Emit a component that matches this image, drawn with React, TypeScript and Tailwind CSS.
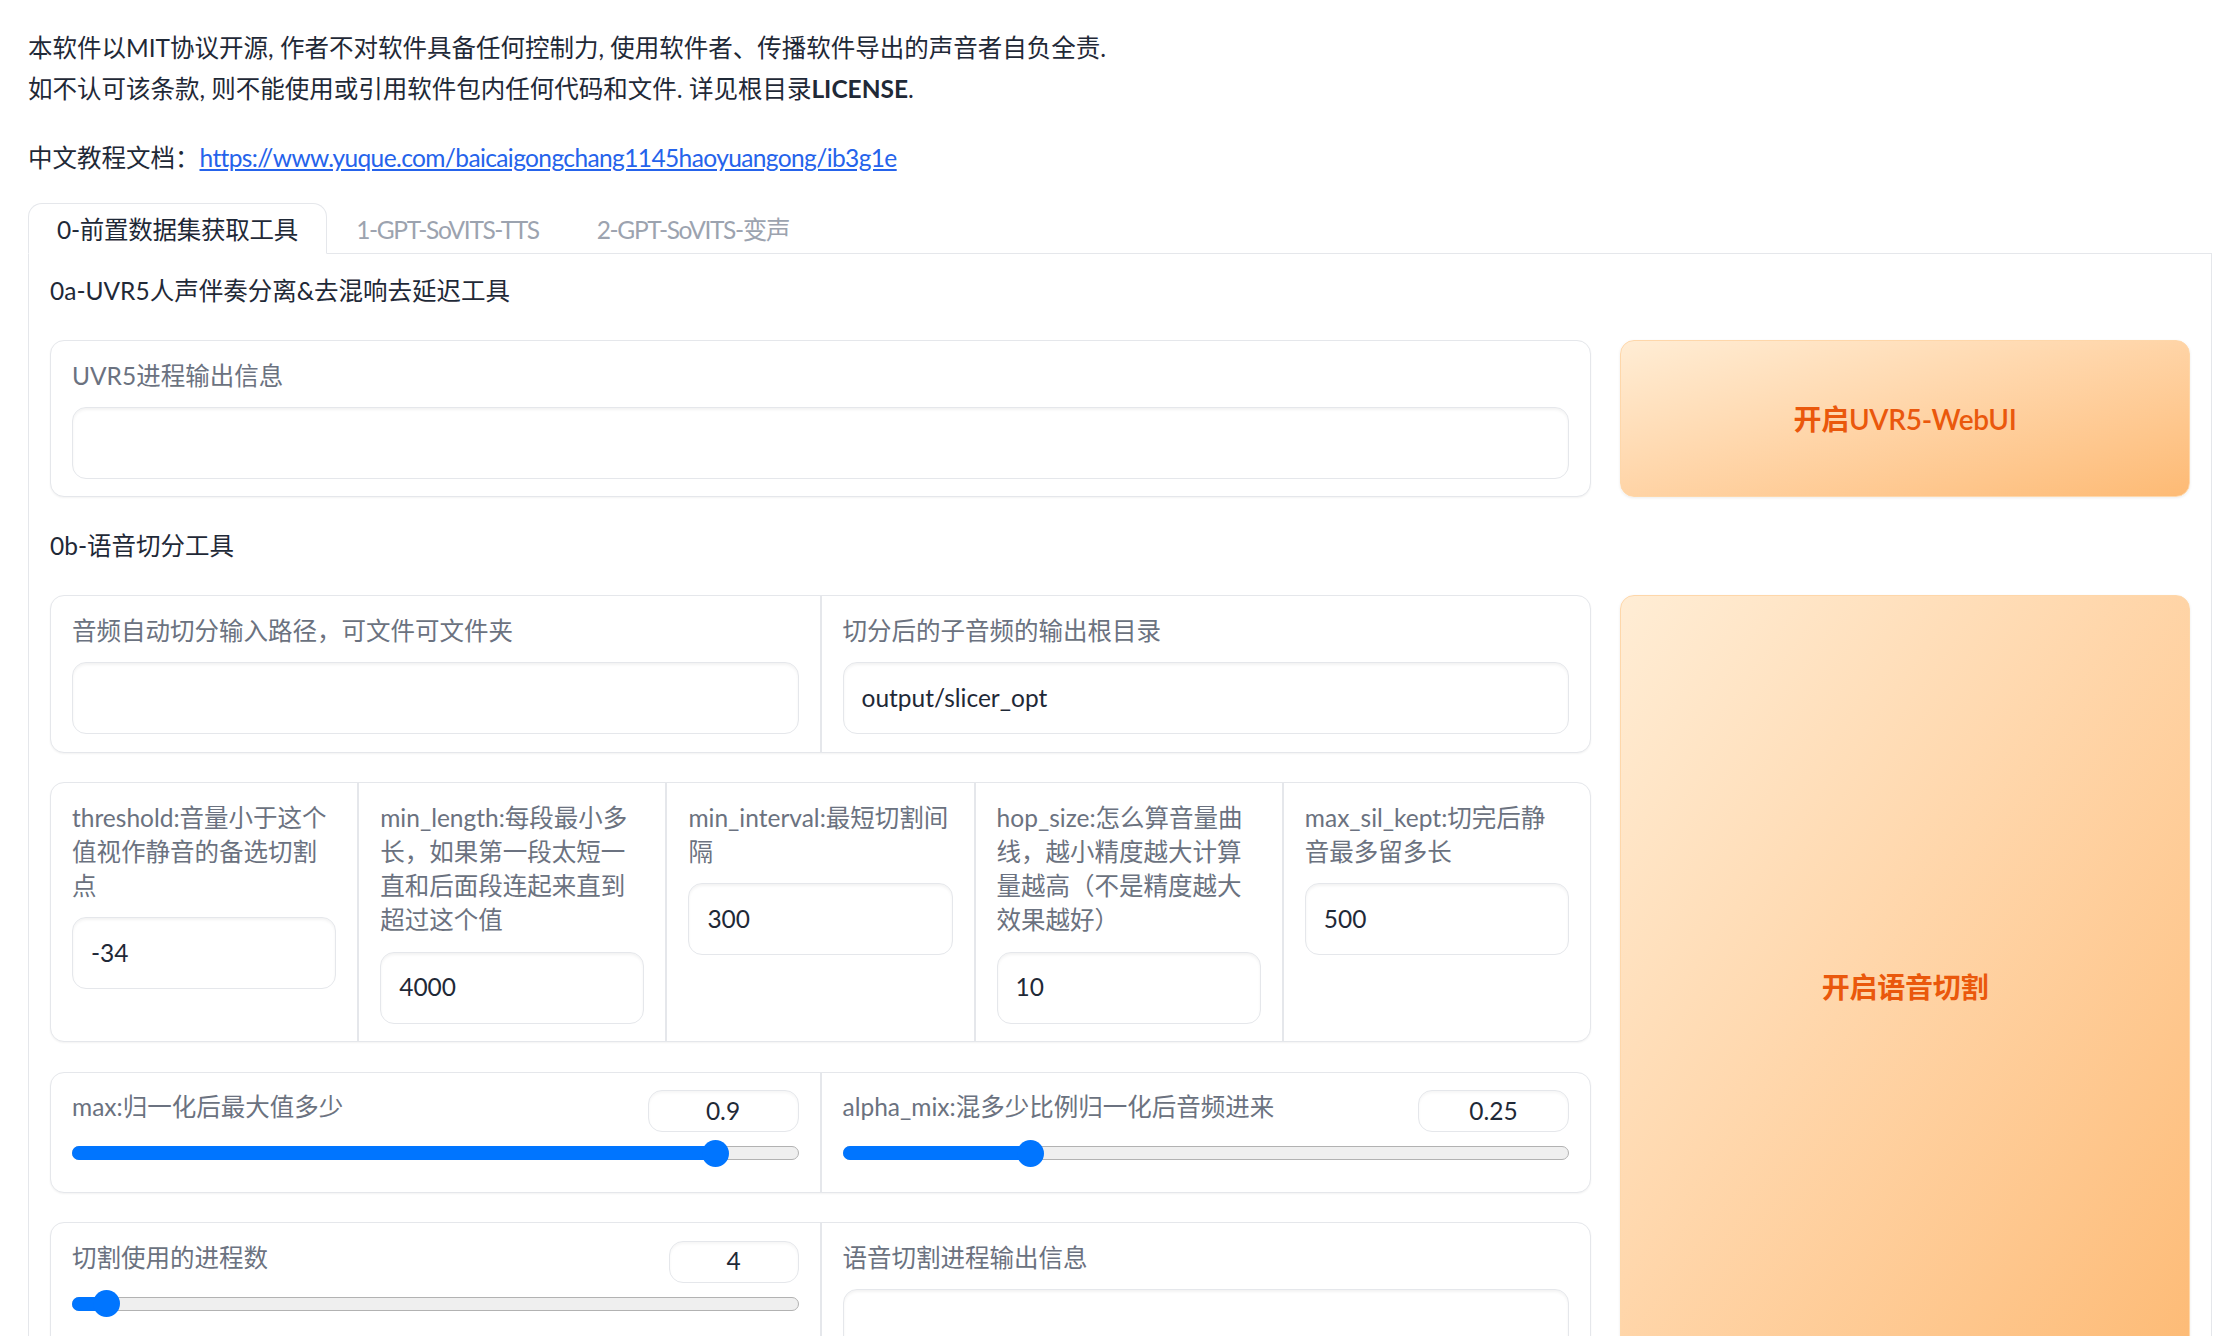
import React from "react";

const border = "border-[#e5e7eb]";

function Label({ children }: { children: React.ReactNode }) {
  return (
    <span className="mb-[14px] block leading-[34.3px] text-[#6b7280]">
      {children}
    </span>
  );
}

function TextBox({ value = "" }: { value?: string }) {
  return (
    <div
      className={`flex h-[72px] w-full items-center rounded-[14px] border ${border} bg-white px-[18px] text-[#1f2937] shadow-[inset_0_2px_3px_rgba(0,0,0,0.05)]`}
    >
      {value}
    </div>
  );
}

function Field({ label, value }: { label: string; value?: string }) {
  return (
    <div className="min-w-0 flex-1 px-[21px] py-[17.5px]">
      <Label>{label}</Label>
      <TextBox value={value} />
    </div>
  );
}

function Slider({
  label,
  value,
  frac,
  numW = "w-[151px]",
}: {
  label: string;
  value: string;
  frac: number;
  numW?: string;
}) {
  return (
    <div className="min-w-0 flex-1 px-[21px] py-[17.5px]">
      <div className="flex h-[42px] items-start justify-between">
        <span className="leading-[34.3px] text-[#6b7280]">{label}</span>
        <div
          className={`flex h-[42px] ${numW} items-center justify-center rounded-[14px] border ${border} bg-white text-[#1f2937] shadow-[inset_0_2px_3px_rgba(0,0,0,0.04)]`}
        >
          {value}
        </div>
      </div>
      <div className="relative h-[42px]">
        <div className="absolute inset-x-0 top-[14px] h-[14px] rounded-full border border-[#b2b2b2] bg-[#efefef]" />
        <div
          className="absolute left-0 top-[14px] h-[14px] rounded-l-full bg-[#0075ff]"
          style={{ width: `calc(13.5px + ${frac} * (100% - 27px))` }}
        />
        <div
          className="absolute top-[7.5px] h-[27px] w-[27px] rounded-full bg-[#0075ff]"
          style={{ left: `calc(${frac} * (100% - 27px))` }}
        />
      </div>
    </div>
  );
}

function Group({ children }: { children: React.ReactNode }) {
  return (
    <div
      className={`flex items-stretch divide-x-2 divide-[#e5e7eb] rounded-[14px] border ${border} bg-white shadow-[0_1px_2px_rgba(0,0,0,0.05)]`}
    >
      {children}
    </div>
  );
}

function PrimaryButton({ children }: { children: React.ReactNode }) {
  return (
    <button className="flex w-[570px] shrink-0 items-center justify-center rounded-[14px] border border-[#fed7aa] bg-gradient-to-br from-[#ffedd5] to-[#fdba74] text-[28px] font-semibold tracking-[-0.01em] text-[#ea580c] shadow-[0_1px_3px_rgba(0,0,0,0.08)]">
      {children}
    </button>
  );
}

const tabs = ["0-前置数据集获取工具", "1-GPT-SoVITS-TTS", "2-GPT-SoVITS-变声"];

export default function App() {
  return (
    <div className="h-screen overflow-hidden bg-white px-[28px] pt-[27px] font-['Lato','Noto_Sans_CJK_SC',sans-serif] text-[24.5px] text-[#1f2937]">
      <div className="leading-[41px]">
        <p>
          本软件以MIT协议开源, 作者不对软件具备任何控制力, 使用软件者、传播软件导出的声音者自负全责.
          <br />
          如不认可该条款, 则不能使用或引用软件包内任何代码和文件. 详见根目录<b>LICENSE</b>.
        </p>
        <p className="mt-[27.5px]">
          中文教程文档：
          <a className="tracking-[-0.025em] text-[#2563eb] underline" href="#">
            https://www.yuque.com/baicaigongchang1145haoyuangong/ib3g1e
          </a>
        </p>
      </div>

      <div className="mt-[25px]">
        <div className={`flex border-b ${border}`}>
          {tabs.map((t, i) => (
            <button
              key={t}
              className={`-mb-px h-[51px] rounded-t-[14px] border px-[28px] pt-[5px] ${
                i === 0
                  ? `${border} border-b-white bg-white tracking-[-0.01em] text-[#1f2937]`
                  : "border-transparent tracking-[-0.055em] text-[#9ca3af]"
              }`}
            >
              {t}
            </button>
          ))}
        </div>

        <div className={`border-x border-b ${border} px-[21px] pb-[40px] pt-[16.5px]`}>
          <h3 className="leading-[42px]">0a-UVR5人声伴奏分离&去混响去延迟工具</h3>
          <div className="mt-[28px] flex items-stretch gap-[29px]">
            <div
              className={`min-w-0 flex-1 rounded-[14px] border ${border} bg-white px-[21px] py-[17.5px] shadow-[0_1px_2px_rgba(0,0,0,0.05)]`}
            >
              <Label>UVR5进程输出信息</Label>
              <TextBox />
            </div>
            <PrimaryButton>开启UVR5-WebUI</PrimaryButton>
          </div>

          <h3 className="mt-[28px] leading-[42px]">0b-语音切分工具</h3>
          <div className="mt-[28px] flex items-stretch gap-[29px]">
            <div className="flex min-w-0 flex-1 flex-col gap-[29.5px]">
              <Group>
                <Field label="音频自动切分输入路径，可文件可文件夹" />
                <Field label="切分后的子音频的输出根目录" value="output/slicer_opt" />
              </Group>
              <Group>
                <Field label="threshold:音量小于这个值视作静音的备选切割点" value="-34" />
                <Field
                  label="min_length:每段最小多长，如果第一段太短一直和后面段连起来直到超过这个值"
                  value="4000"
                />
                <Field label="min_interval:最短切割间隔" value="300" />
                <Field
                  label="hop_size:怎么算音量曲线，越小精度越大计算量越高（不是精度越大效果越好）"
                  value="10"
                />
                <Field label="max_sil_kept:切完后静音最多留多长" value="500" />
              </Group>
              <Group>
                <Slider label="max:归一化后最大值多少" value="0.9" frac={0.9} />
                <Slider label="alpha_mix:混多少比例归一化后音频进来" value="0.25" frac={0.25} />
              </Group>
              <Group>
                <Slider label="切割使用的进程数" value="4" frac={0.03} numW="w-[130px]" />
                <Field label="语音切割进程输出信息" />
              </Group>
            </div>
            <PrimaryButton>开启语音切割</PrimaryButton>
          </div>
        </div>
      </div>
    </div>
  );
}
